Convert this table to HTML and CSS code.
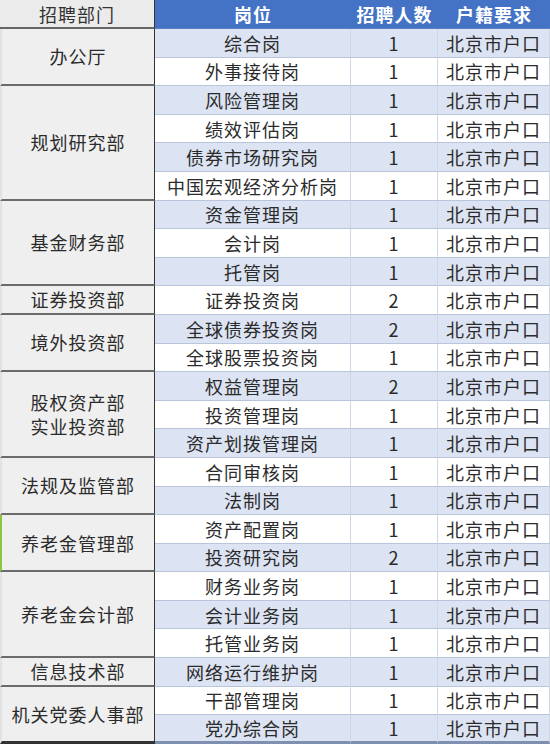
FILE: index.html
```html
<!DOCTYPE html>
<html lang="zh">
<head>
<meta charset="utf-8">
<link rel="stylesheet" href="styles.css">
</head>
<body>
<div class="sheet">
  <div class="hd hd-dept">招聘部门</div>
  <div class="hd">岗位</div>
  <div class="hd">招聘人数</div>
  <div class="hd">户籍要求</div>

  <div class="dept s2">办公厅</div>
  <div class="c b">综合岗</div><div class="c b">1</div><div class="c b">北京市户口</div>
  <div class="c w">外事接待岗</div><div class="c w">1</div><div class="c w">北京市户口</div>

  <div class="dept s4">规划研究部</div>
  <div class="c b">风险管理岗</div><div class="c b">1</div><div class="c b">北京市户口</div>
  <div class="c w">绩效评估岗</div><div class="c w">1</div><div class="c w">北京市户口</div>
  <div class="c b">债券市场研究岗</div><div class="c b">1</div><div class="c b">北京市户口</div>
  <div class="c w">中国宏观经济分析岗</div><div class="c w">1</div><div class="c w">北京市户口</div>

  <div class="dept s3">基金财务部</div>
  <div class="c b">资金管理岗</div><div class="c b">1</div><div class="c b">北京市户口</div>
  <div class="c w">会计岗</div><div class="c w">1</div><div class="c w">北京市户口</div>
  <div class="c b">托管岗</div><div class="c b">1</div><div class="c b">北京市户口</div>

  <div class="dept s1">证券投资部</div>
  <div class="c w">证券投资岗</div><div class="c w">2</div><div class="c w">北京市户口</div>

  <div class="dept s2">境外投资部</div>
  <div class="c b">全球债券投资岗</div><div class="c b">2</div><div class="c b">北京市户口</div>
  <div class="c w">全球股票投资岗</div><div class="c w">1</div><div class="c w">北京市户口</div>

  <div class="dept s3">股权资产部<br>实业投资部</div>
  <div class="c b">权益管理岗</div><div class="c b">2</div><div class="c b">北京市户口</div>
  <div class="c w">投资管理岗</div><div class="c w">1</div><div class="c w">北京市户口</div>
  <div class="c b">资产划拨管理岗</div><div class="c b">1</div><div class="c b">北京市户口</div>

  <div class="dept s2">法规及监管部</div>
  <div class="c w">合同审核岗</div><div class="c w">1</div><div class="c w">北京市户口</div>
  <div class="c b">法制岗</div><div class="c b">1</div><div class="c b">北京市户口</div>

  <div class="dept s2 mark">养老金管理部</div>
  <div class="c w">资产配置岗</div><div class="c w">1</div><div class="c w">北京市户口</div>
  <div class="c b">投资研究岗</div><div class="c b">2</div><div class="c b">北京市户口</div>

  <div class="dept s3">养老金会计部</div>
  <div class="c w">财务业务岗</div><div class="c w">1</div><div class="c w">北京市户口</div>
  <div class="c b">会计业务岗</div><div class="c b">1</div><div class="c b">北京市户口</div>
  <div class="c w">托管业务岗</div><div class="c w">1</div><div class="c w">北京市户口</div>

  <div class="dept s1">信息技术部</div>
  <div class="c b">网络运行维护岗</div><div class="c b">1</div><div class="c b">北京市户口</div>

  <div class="dept s2 last">机关党委人事部</div>
  <div class="c w">干部管理岗</div><div class="c w">1</div><div class="c w">北京市户口</div>
  <div class="c b lastrow">党办综合岗</div><div class="c b lastrow">1</div><div class="c b lastrow">北京市户口</div>
</div>
</body>
</html>
```
FILE: styles.css
```css
html, body {
  margin: 0;
  padding: 0;
  background: #ffffff;
}
body {
  width: 550px;
  height: 744px;
  overflow: hidden;
}
.sheet {
  display: grid;
  grid-template-columns: 155px 196px 87px 112px;
  grid-template-rows: 29px repeat(25, 28.6px);
  grid-auto-flow: row dense;
  font-family: "Noto Sans CJK SC", "Noto Sans", sans-serif;
  font-size: 18px;
  letter-spacing: 1px;
  color: #2b2b2b;
}
.hd {
  background: #4472c4;
  color: #ffffff;
  font-weight: bold;
  display: flex;
  align-items: center;
  justify-content: center;
  border-bottom: 1px solid #5a7fc4;
  box-sizing: border-box;
  line-height: 1;
}
.hd-dept {
  background: #ebebeb;
  color: #333333;
  font-weight: normal;
  border-right: 1px solid #333333;
  border-bottom: 2px solid #666666;
}
.dept {
  grid-column: 1;
  background: #efefef;
  display: flex;
  align-items: center;
  justify-content: center;
  text-align: center;
  line-height: 1.35;
  border-right: 1px solid #333333;
  border-bottom: 2px solid #6b6b6b;
  border-left: 2px solid #e2e2e2;
  box-sizing: border-box;
}
.s1 { grid-row: span 1; }
.s2 { grid-row: span 2; }
.s3 { grid-row: span 3; }
.s4 { grid-row: span 4; }
.mark { border-left: 2px solid #8cc63f; }
.last { border-bottom: 3px solid #333333; }
.c {
  display: flex;
  align-items: center;
  justify-content: center;
  line-height: 1;
  border-bottom: 1px solid #b9c5dd;
  border-right: 1px solid #d0d6e2;
  box-sizing: border-box;
  white-space: nowrap;
}
.b { background: #dce3f2; }
.w { background: #ffffff; }
.lastrow { border-bottom: 3px solid #7f8fb0; }
```
